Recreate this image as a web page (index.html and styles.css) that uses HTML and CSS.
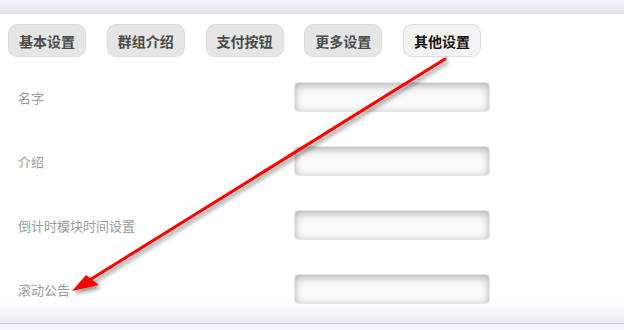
FILE: index.html
```html
<!DOCTYPE html>
<html lang="zh">
<head>
    <meta charset="UTF-8">
    <meta name="viewport" content="width=device-width, initial-scale=1.0">
    <title>其他设置</title>
    <link rel="stylesheet" href="styles.css">
</head>
<body>
    <div class="topbar"></div>
    <div class="panel">
        <div class="tabs">
            <button class="tab">基本设置</button>
            <button class="tab">群组介绍</button>
            <button class="tab">支付按钮</button>
            <button class="tab">更多设置</button>
            <button class="tab active">其他设置</button>
        </div>
        <div class="form">
            <div class="row"><label>名字</label><input type="text"></div>
            <div class="row"><label>介绍</label><input type="text"></div>
            <div class="row"><label>倒计时模块时间设置</label><input type="text"></div>
            <div class="row"><label>滚动公告</label><input type="text"></div>
        </div>
        <!-- 标注箭头 -->
        <svg class="arrow" width="624" height="330" viewBox="0 0 624 330">
            <defs>
                <filter id="shadow" x="-10%" y="-10%" width="130%" height="130%">
                    <feDropShadow dx="2" dy="3" stdDeviation="2" flood-color="#000" flood-opacity="0.45"/>
                </filter>
            </defs>
            <g filter="url(#shadow)">
                <line x1="445" y1="59" x2="88" y2="281" stroke="#ff0000" stroke-width="3" stroke-linecap="round"/>
                <polygon points="72,291 86,275 99,285" fill="#ff0000"/>
            </g>
        </svg>
    </div>
    <div class="bottom"></div>
</body>
</html>
```

FILE: styles.css
```css
body {
    margin: 0;
    font-family: "Microsoft YaHei", "Noto Sans CJK SC", sans-serif;
    background: #f4f4f9;
    width: 624px;
    height: 330px;
    overflow: hidden;
}
.topbar {
    height: 14px;
    background: linear-gradient(#f4f4f8, #e2e2ee);
}
.panel {
    position: relative;
    height: 309px;
    background: linear-gradient(#ffffff 0, #ffffff 288px, #e9e9f2 309px);
    border-bottom: 1px solid #c6c6d6;
}
.tabs {
    display: flex;
    gap: 20.75px;
    padding: 10px 0 0 8px;
}
.tab {
    width: 78px;
    height: 33px;
    padding: 0;
    border: 1px solid #dcdcdc;
    border-radius: 9px;
    background: #e5e5e5;
    color: #4a4a4a;
    font-family: inherit;
    font-size: 14px;
    font-weight: bold;
}
.tab.active {
    background: #f3f3f3;
    color: #111;
}
.form {
    padding-top: 8px;
}
.row {
    display: flex;
    align-items: center;
    height: 64px;
}
.row label {
    width: 276px;
    padding-left: 18px;
    font-size: 13px;
    color: #9a9a9a;
}
.row input {
    width: 196px;
    height: 30px;
    box-sizing: border-box;
    border: 1px solid #e4e4e4;
    border-radius: 4px;
    background: #fafafa;
    box-shadow: inset 0 4px 8px rgba(0, 0, 0, 0.2), inset 0 0 7px rgba(0, 0, 0, 0.12);
}
.arrow {
    position: absolute;
    left: 0;
    top: -14px;
    pointer-events: none;
}
```
